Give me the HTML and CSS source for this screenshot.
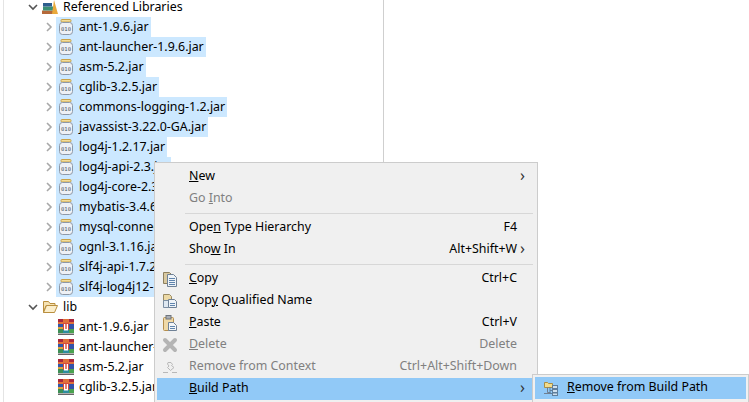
FILE: index.html
```html
<!DOCTYPE html>
<html lang="en">
<head>
<meta charset="utf-8">
<title>Build Path menu</title>
<link rel="stylesheet" href="styles.css">
</head>
<body>
<svg class="defs" width="0" height="0" aria-hidden="true">
  <defs>
    <symbol id="jar" viewBox="0 0 16 16">
      <rect x="3" y="0.5" width="10" height="2.500" rx="1" fill="#f3dd9a" stroke="#c8a24a"/>
      <rect x="1.500" y="3.500" width="13" height="12" rx="3" fill="#eef1f5" stroke="#8e98a6"/>
      <text x="8" y="11.500" class="jar-bits" text-anchor="middle">010</text>
    </symbol>
    <symbol id="rar" viewBox="0 0 16 16">
      <rect x="0" y="0" width="16" height="16" fill="#fff"/>
      <rect x="0" y="0" width="5" height="3" fill="#a8263c"/>
      <rect x="0" y="3" width="5" height="2" fill="#e0703a"/>
      <rect x="0" y="5" width="5" height="3" fill="#3453a8"/>
      <rect x="0" y="8" width="5" height="2" fill="#d9a13a"/>
      <rect x="0" y="10" width="5" height="4" fill="#3c8f55"/>
      <rect x="5" y="0" width="6" height="4" fill="#e0703a"/>
      <rect x="5" y="4" width="6" height="7" fill="#d84a3c"/>
      <rect x="5" y="11" width="6" height="3" fill="#2f8d9c"/>
      <rect x="11" y="0" width="5" height="3" fill="#a8263c"/>
      <rect x="11" y="3" width="5" height="2" fill="#e0703a"/>
      <rect x="11" y="5" width="5" height="5" fill="#3453a8"/>
      <rect x="11" y="10" width="5" height="4" fill="#4aa24f"/>
      <rect x="6" y="5" width="1.300" height="6" fill="#fff"/>
      <rect x="8.700" y="5" width="1.300" height="6" fill="#fff"/>
      <rect x="6" y="10" width="4" height="1.500" fill="#fff"/>
      <rect x="0" y="14.500" width="16" height="1.500" fill="#666"/>
    </symbol>
    <symbol id="doc" viewBox="0 0 16 16">
      <path d="M1.500 1.500h6l2 2v9h-8z" fill="#d9c9a0" stroke="#8d7f5e"/>
      <path d="M5.500 3.500h6l3 3v9h-9z" fill="#eef3f8" stroke="#6f8196"/>
      <path d="M7 7.500h6M7 9.500h6M7 11.500h6M7 13.500h6" stroke="#5f84ad"/>
    </symbol>
  </defs>
</svg>

<div class="tree-pane">
  <ul class="tree">
    <li class="row lvl1">
      <svg class="twist" viewBox="0 0 10 6"><path d="M1 1l4 4 4-4" class="open"/></svg>
      <span class="label">
        <svg class="icon" viewBox="0 0 16 16"><rect x="0" y="11.500" width="11" height="3.500" fill="#b5693a"/><rect x="1" y="7.500" width="10" height="4" fill="#3b8f74"/><rect x="1" y="4" width="9" height="3.500" fill="#2f5e8e"/><path d="M10 15l2-14 4 14z" fill="#e9a93c"/></svg>
        <span class="name">Referenced Libraries</span>
      </span>
    </li>
    <li class="row lvl2 sel"><svg class="twist" viewBox="0 0 6 10"><path d="M1 1l4 4-4 4" class="closed"/></svg><span class="label"><svg class="icon"><use href="#jar"/></svg><span class="name">ant-1.9.6.jar</span></span></li>
    <li class="row lvl2 sel"><svg class="twist" viewBox="0 0 6 10"><path d="M1 1l4 4-4 4" class="closed"/></svg><span class="label"><svg class="icon"><use href="#jar"/></svg><span class="name">ant-launcher-1.9.6.jar</span></span></li>
    <li class="row lvl2 sel"><svg class="twist" viewBox="0 0 6 10"><path d="M1 1l4 4-4 4" class="closed"/></svg><span class="label"><svg class="icon"><use href="#jar"/></svg><span class="name">asm-5.2.jar</span></span></li>
    <li class="row lvl2 sel"><svg class="twist" viewBox="0 0 6 10"><path d="M1 1l4 4-4 4" class="closed"/></svg><span class="label"><svg class="icon"><use href="#jar"/></svg><span class="name">cglib-3.2.5.jar</span></span></li>
    <li class="row lvl2 sel"><svg class="twist" viewBox="0 0 6 10"><path d="M1 1l4 4-4 4" class="closed"/></svg><span class="label"><svg class="icon"><use href="#jar"/></svg><span class="name">commons-logging-1.2.jar</span></span></li>
    <li class="row lvl2 sel"><svg class="twist" viewBox="0 0 6 10"><path d="M1 1l4 4-4 4" class="closed"/></svg><span class="label"><svg class="icon"><use href="#jar"/></svg><span class="name">javassist-3.22.0-GA.jar</span></span></li>
    <li class="row lvl2 sel"><svg class="twist" viewBox="0 0 6 10"><path d="M1 1l4 4-4 4" class="closed"/></svg><span class="label"><svg class="icon"><use href="#jar"/></svg><span class="name">log4j-1.2.17.jar</span></span></li>
    <li class="row lvl2 sel"><svg class="twist" viewBox="0 0 6 10"><path d="M1 1l4 4-4 4" class="closed"/></svg><span class="label"><svg class="icon"><use href="#jar"/></svg><span class="name">log4j-api-2.3.jar</span></span></li>
    <li class="row lvl2 sel"><svg class="twist" viewBox="0 0 6 10"><path d="M1 1l4 4-4 4" class="closed"/></svg><span class="label"><svg class="icon"><use href="#jar"/></svg><span class="name">log4j-core-2.3.jar</span></span></li>
    <li class="row lvl2 sel"><svg class="twist" viewBox="0 0 6 10"><path d="M1 1l4 4-4 4" class="closed"/></svg><span class="label"><svg class="icon"><use href="#jar"/></svg><span class="name">mybatis-3.4.6.jar</span></span></li>
    <li class="row lvl2 sel"><svg class="twist" viewBox="0 0 6 10"><path d="M1 1l4 4-4 4" class="closed"/></svg><span class="label"><svg class="icon"><use href="#jar"/></svg><span class="name">mysql-connector-java.jar</span></span></li>
    <li class="row lvl2 sel"><svg class="twist" viewBox="0 0 6 10"><path d="M1 1l4 4-4 4" class="closed"/></svg><span class="label"><svg class="icon"><use href="#jar"/></svg><span class="name">ognl-3.1.16.jar</span></span></li>
    <li class="row lvl2 sel"><svg class="twist" viewBox="0 0 6 10"><path d="M1 1l4 4-4 4" class="closed"/></svg><span class="label"><svg class="icon"><use href="#jar"/></svg><span class="name">slf4j-api-1.7.25.jar</span></span></li>
    <li class="row lvl2 sel"><svg class="twist" viewBox="0 0 6 10"><path d="M1 1l4 4-4 4" class="closed"/></svg><span class="label"><svg class="icon"><use href="#jar"/></svg><span class="name">slf4j-log4j12-1.7.25.jar</span></span></li>
    <li class="row lvl1">
      <svg class="twist" viewBox="0 0 10 6"><path d="M1 1l4 4 4-4" class="open"/></svg>
      <span class="label">
        <svg class="icon" viewBox="0 0 16 16"><path d="M1.500 13.500v-11h5l1.500 2h5v2H4z" fill="#f6e3b4" stroke="#b98f3f"/><path d="M1.500 13.500l3-7h11l-3 7z" fill="#fbeecb" stroke="#b98f3f"/></svg>
        <span class="name">lib</span>
      </span>
    </li>
    <li class="row lvl2"><span class="twist-gap"></span><span class="label"><svg class="icon"><use href="#rar"/></svg><span class="name">ant-1.9.6.jar</span></span></li>
    <li class="row lvl2"><span class="twist-gap"></span><span class="label"><svg class="icon"><use href="#rar"/></svg><span class="name">ant-launcher-1.9.6.jar</span></span></li>
    <li class="row lvl2"><span class="twist-gap"></span><span class="label"><svg class="icon"><use href="#rar"/></svg><span class="name">asm-5.2.jar</span></span></li>
    <li class="row lvl2"><span class="twist-gap"></span><span class="label"><svg class="icon"><use href="#rar"/></svg><span class="name">cglib-3.2.5.jar</span></span></li>
  </ul>
</div>

<div class="menu">
  <div class="item"><span class="gutter"></span><span class="text"><u>N</u>ew</span><span class="arrow">&#8250;</span></div>
  <div class="item off"><span class="gutter"></span><span class="text">Go <u>I</u>nto</span></div>
  <div class="sep"></div>
  <div class="item"><span class="gutter"></span><span class="text">Ope<u>n</u> Type Hierarchy</span><span class="keys">F4</span></div>
  <div class="item"><span class="gutter"></span><span class="text">Sho<u>w</u> In</span><span class="keys tight-keys">Alt+Shift+W</span><span class="arrow tight">&#8250;</span></div>
  <div class="sep"></div>
  <div class="item"><span class="gutter"><svg class="icon"><use href="#doc"/></svg></span><span class="text"><u>C</u>opy</span><span class="keys">Ctrl+C</span></div>
  <div class="item"><span class="gutter"><svg class="icon" viewBox="0 0 16 16"><path d="M1.500 1.500h6l2 2v5h-8z" fill="#ecd9a6" stroke="#9a8a62"/><path d="M1.500 7.500h5v7h-5z" fill="#dfe8f1" stroke="#7c8ea3"/><path d="M6.500 6.500h6l2 2v6h-8z" fill="#eef3f8" stroke="#6f8196"/><path d="M8 10.500h5M8 12.500h5" stroke="#5f84ad"/></svg></span><span class="text">Cop<u>y</u> Qualified Name</span></div>
  <div class="item"><span class="gutter"><svg class="icon" viewBox="0 0 16 16"><rect x="1.500" y="2.500" width="10" height="13" rx="1" fill="#efd9a8" stroke="#b58f4e"/><rect x="4" y="0.500" width="5" height="3.500" fill="#a9aeb5" stroke="#6f757d"/><path d="M6.500 7.500h5l3 3v5h-8z" fill="#f2f5f8" stroke="#6f8196"/><path d="M8 11.500h5M8 13.500h5" stroke="#5f84ad"/></svg></span><span class="text"><u>P</u>aste</span><span class="keys">Ctrl+V</span></div>
  <div class="item off"><span class="gutter"><svg class="icon" viewBox="0 0 16 16"><path d="M3 3l10 10M13 3L3 13" stroke="#b4b4b4" stroke-width="4" stroke-linecap="round"/></svg></span><span class="text"><u>D</u>elete</span><span class="keys">Delete</span></div>
  <div class="item off"><span class="gutter"><svg class="icon" viewBox="0 0 16 16"><path d="M6 3.500h3l1.500 2-1 1 2.500 2-3.500 3-3-3 1.500-1.500-1.500-2z" fill="#efefef" stroke="#b8b8b8"/><path d="M1 13.500h5M10 13.500h5" stroke="#b8b8b8"/></svg></span><span class="text">Remove from Context</span><span class="keys">Ctrl+Alt+Shift+Down</span></div>
  <div class="item active"><span class="gutter"></span><span class="text"><u>B</u>uild Path</span><span class="arrow">&#8250;</span></div>
</div>

<div class="submenu">
  <div class="item active"><span class="sub-gutter"><svg class="icon" viewBox="0 0 16 16"><path d="M1.500 2.500h3l1 1h4v4h-8z" fill="#f2dc8c" stroke="#a98d45"/><path d="M4.500 7.500v5h3M1 13.500h6" stroke="#6f7f91" fill="none"/><rect x="9.500" y="5.500" width="5" height="3" fill="#cfe0ef" stroke="#5f7e9c"/><rect x="9.500" y="9.500" width="5" height="3" fill="#cfe0ef" stroke="#5f7e9c"/><rect x="9.500" y="13" width="5" height="2.500" fill="#cfe0ef" stroke="#5f7e9c"/><path d="M7 7v6.500h2.500M7 10.500h2.500" stroke="#5f7e9c" fill="none"/></svg></span><span class="text"><u>R</u>emove from Build Path</span></div>
</div>
</body>
</html>
```

FILE: styles.css
```css
* {
  box-sizing: border-box;
}

html,
body {
  margin: 0;
  height: 100%;
  overflow: hidden;
  background: #fff;
  color: #000;
  font-family: "Noto Sans", "Open Sans", sans-serif;
  font-size: 12.4px;
}

.defs {
  position: absolute;
}

.jar-bits {
  font-family: "DejaVu Sans Mono", monospace;
  font-size: 5.5px;
  fill: #4a5563;
}

.tree-pane {
  width: 381px;
  height: 402px;
  overflow: hidden;
  margin-left: 3px;
  border-left: 1px solid #e4e4e4;
  border-right: 1px solid #cfcfcf;
}

.tree {
  list-style: none;
  margin: -3px 0 0;
  padding: 0;
}

.row {
  display: flex;
  align-items: center;
  height: 20px;
  white-space: nowrap;
}

.lvl1 {
  padding-left: 24px;
}

.lvl2 {
  padding-left: 40px;
}

.twist {
  flex: none;
  width: 10px;
  height: 10px;
  margin-right: 2px;
}

.twist-gap {
  flex: none;
  width: 12px;
}

.open {
  fill: none;
  stroke: #555;
  stroke-width: 1.6;
}

.closed {
  fill: none;
  stroke: #a8a8a8;
  stroke-width: 1.6;
}

.label {
  display: flex;
  align-items: center;
  height: 20px;
  padding: 0 2px;
}

.sel .label {
  background: #cce8ff;
}

.icon {
  flex: none;
  width: 16px;
  height: 16px;
}

.name {
  margin-left: 5px;
  padding-bottom: 2px;
}

.menu {
  position: absolute;
  left: 154px;
  top: 162px;
  width: 384px;
  height: 244px;
  padding: 3px 2px;
  background: #f0f0f0;
  border: 1px solid #cccccc;
}

.item {
  display: flex;
  align-items: center;
  height: 22px;
  white-space: nowrap;
}

.off {
  color: #808080;
}

.active {
  background: #91c9f7;
}

.gutter {
  flex: none;
  display: flex;
  align-items: center;
  justify-content: center;
  width: 32px;
  height: 22px;
  padding-right: 7px;
}

.text,
.keys {
  padding-bottom: 4px;
}

.text {
  flex: 1;
}

.keys {
  padding-right: 18px;
}

.tight-keys {
  padding-right: 0;
}

.arrow {
  flex: none;
  width: 15px;
  padding-bottom: 4px;
  font-size: 16px;
  line-height: 18px;
  color: #333;
}

.arrow.tight {
  margin-left: 3px;
}

.sep {
  height: 1px;
  margin: 3px 2px 3px 28px;
  background: #d7d7d7;
}

.submenu {
  position: absolute;
  left: 532px;
  top: 374px;
  width: 217px;
  height: 30px;
  padding: 2px;
  background: #f0f0f0;
  border: 1px solid #cccccc;
}

.sub-gutter {
  flex: none;
  display: flex;
  align-items: center;
  justify-content: center;
  width: 32px;
}
```
